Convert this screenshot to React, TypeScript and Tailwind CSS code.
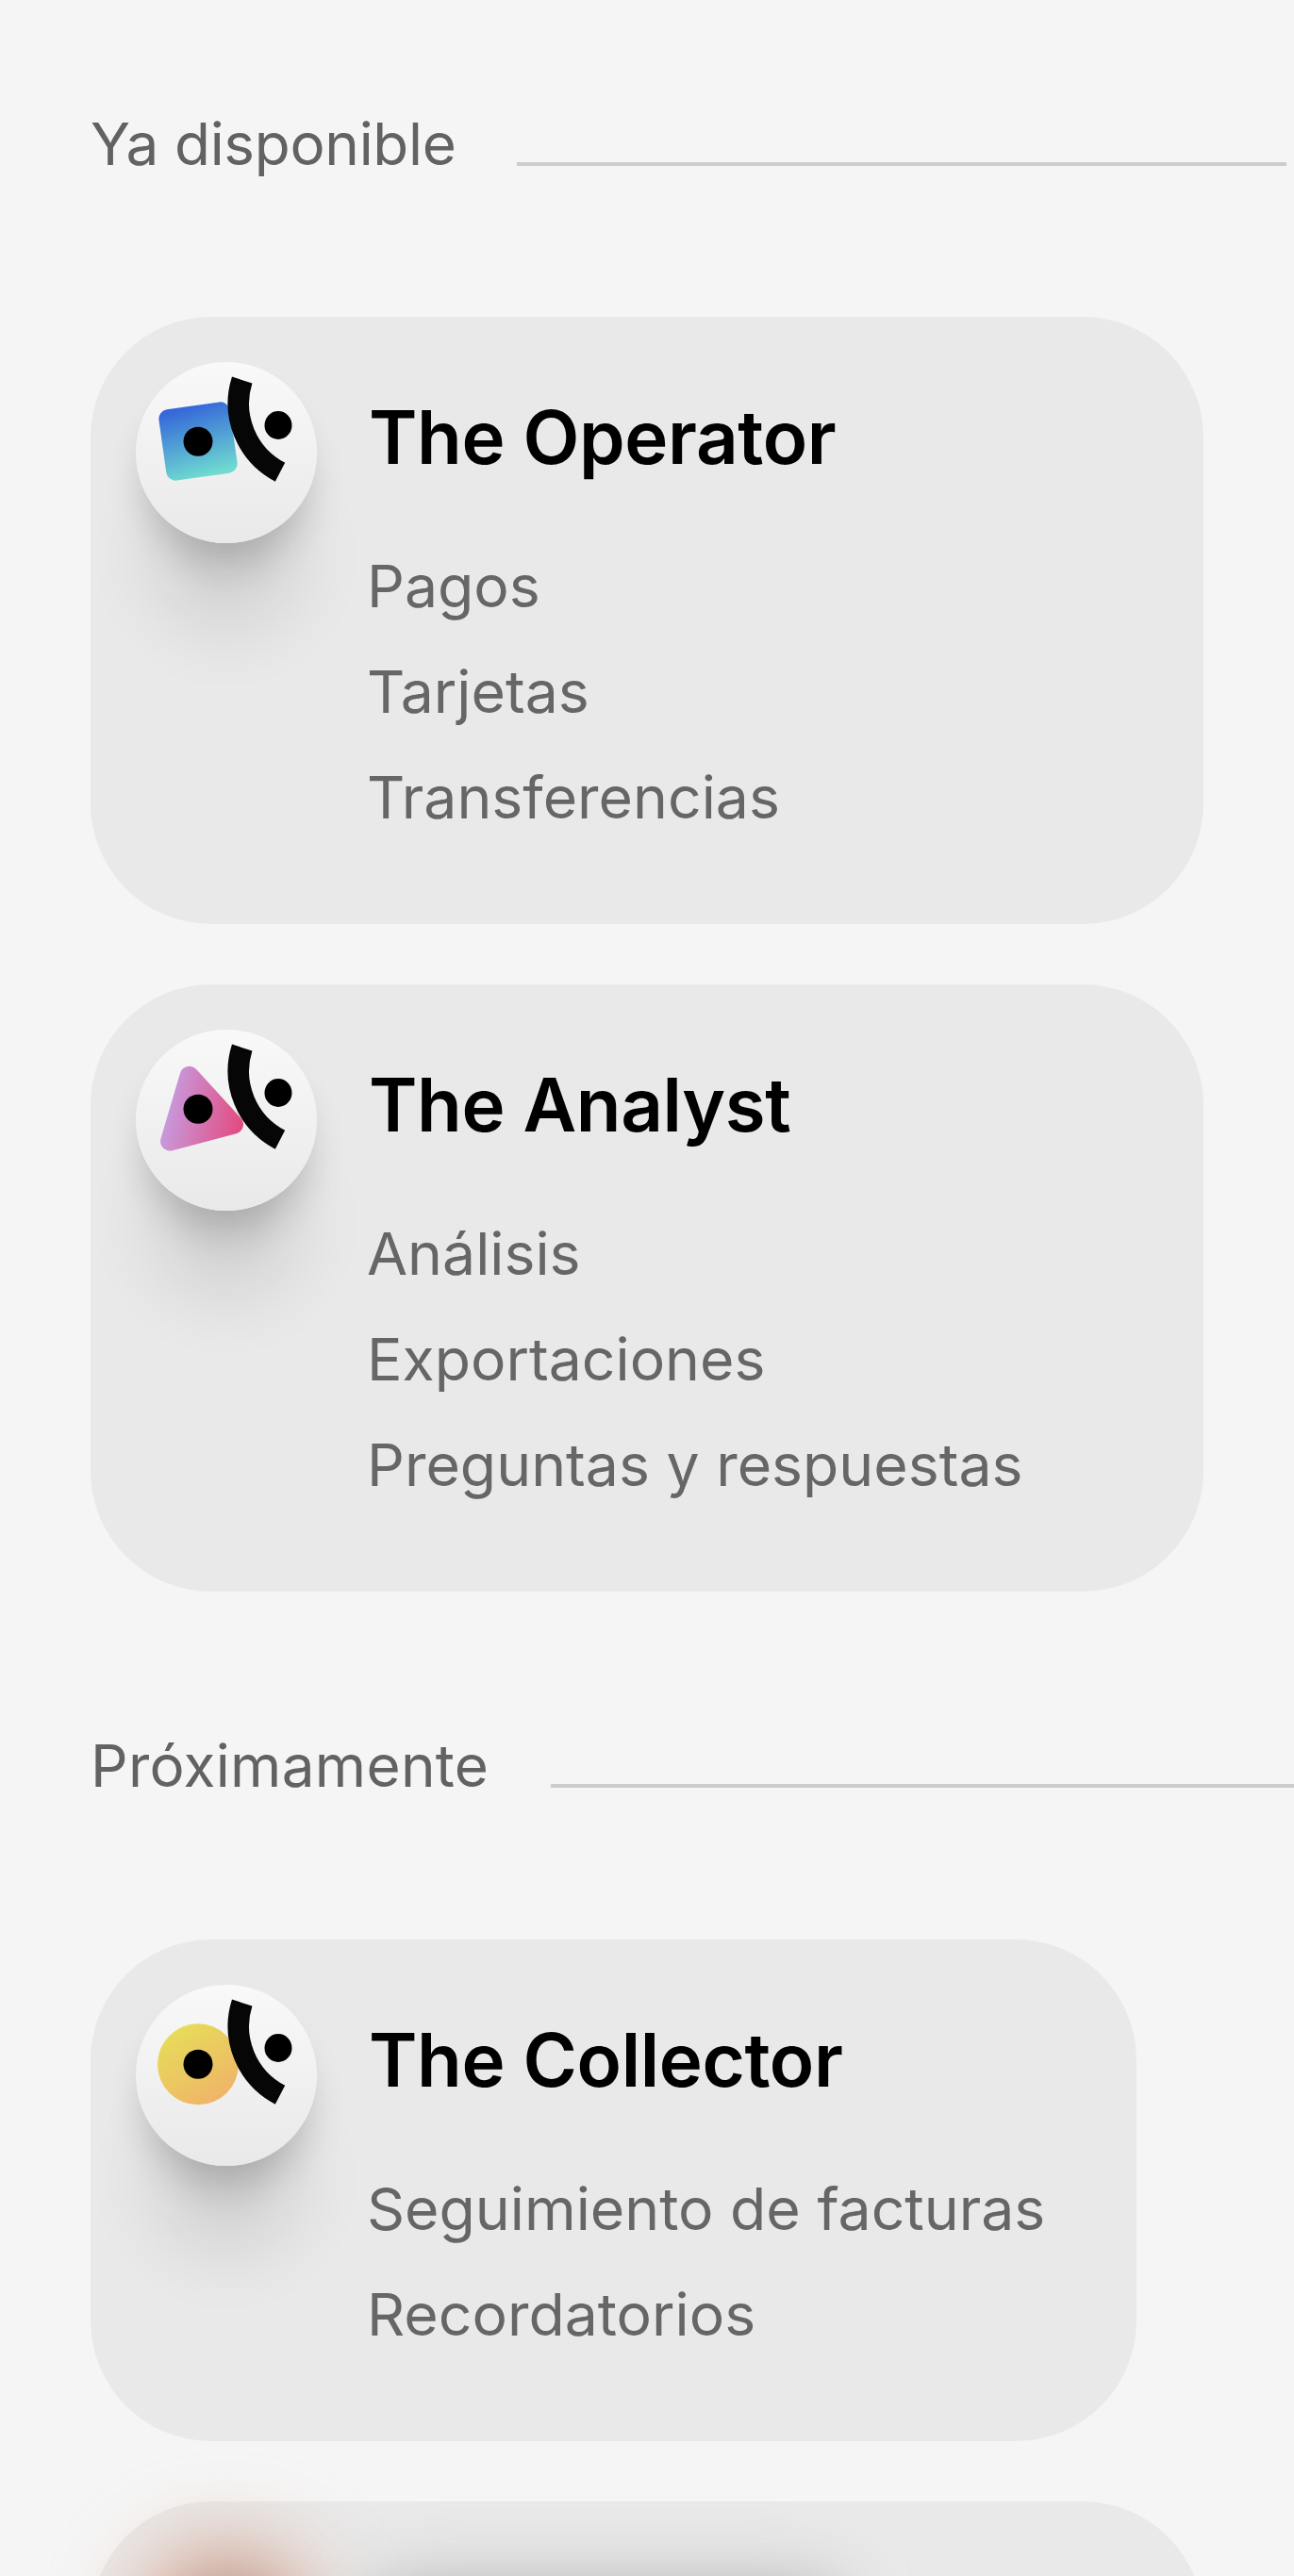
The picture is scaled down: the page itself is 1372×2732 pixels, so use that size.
const font = { fontFamily: "Inter, sans-serif" };

type Shape = "square" | "triangle" | "circle";

function Logo({ id, shape }: { id: string; shape: Shape }) {
  return (
    <svg viewBox="0 0 192 192" className="block h-[192px] w-[192px]">
      <defs>
        <linearGradient id={`${id}-square`} x1="61" y1="46" x2="72" y2="122" gradientUnits="userSpaceOnUse">
          <stop offset="0" stopColor="#3567d9" />
          <stop offset="1" stopColor="#6fdcd0" />
        </linearGradient>
        <linearGradient id={`${id}-triangle`} x1="28" y1="84" x2="118" y2="102" gradientUnits="userSpaceOnUse">
          <stop offset="0" stopColor="#c69ee2" />
          <stop offset="1" stopColor="#e5467a" />
        </linearGradient>
        <linearGradient id={`${id}-circle`} x1="40" y1="48" x2="90" y2="122" gradientUnits="userSpaceOnUse">
          <stop offset="0" stopColor="#e6dc5a" />
          <stop offset="1" stopColor="#f0b468" />
        </linearGradient>
      </defs>
      {shape === "square" && (
        <rect x="28" y="46" width="76" height="76" rx="10" fill={`url(#${id}-square)`} transform="rotate(-8 66 84)" />
      )}
      {shape === "triangle" && (
        <polygon
          points="56.7,48.7 36,118.5 104,100.5"
          fill={`url(#${id}-triangle)`}
          stroke={`url(#${id}-triangle)`}
          strokeWidth="20"
          strokeLinejoin="round"
        />
      )}
      {shape === "circle" && <circle cx="66" cy="84.3" r="43" fill={`url(#${id}-circle)`} />}
      <circle cx="66" cy="84.3" r="15.5" fill="#000" />
      <path d="M112.7 19 A82 82 0 0 0 153 116.7" fill="none" stroke="#060606" strokeWidth="22.5" />
      <ellipse cx="151" cy="67" rx="14.5" ry="15" fill="#000" />
    </svg>
  );
}

function Badge({ id, shape }: { id: string; shape: Shape }) {
  return (
    <div className="h-[192px] w-[192px] shrink-0 rounded-full bg-gradient-to-b from-[#f9f9f9] to-[#e9e9e9] shadow-[0_30px_40px_-10px_rgba(0,0,0,0.2),0_110px_80px_-20px_rgba(0,0,0,0.11)]">
      <Logo id={id} shape={shape} />
    </div>
  );
}

function Card({
  id,
  shape,
  title,
  items,
  width,
}: {
  id: string;
  shape: Shape;
  title: string;
  items: string[];
  width: string;
}) {
  return (
    <div className={`flex gap-[53px] rounded-[128px] bg-[#e9e9e9] pb-[79px] pl-[48px] pt-[48px] ${width}`}>
      <Badge id={id} shape={shape} />
      <div>
        <h2 className="ml-[2px] pt-[33px] text-[78px] font-semibold leading-[94px] tracking-[-0.005em] text-black">
          {title}
        </h2>
        <ul className="mt-[54px]">
          {items.map((item) => (
            <li key={item} className="whitespace-nowrap text-[62.5px] leading-[112px] text-[#666666]">
              {item}
            </li>
          ))}
        </ul>
      </div>
    </div>
  );
}

function SectionTitle({ children, labelClass }: { children: string; labelClass: string }) {
  return (
    <div className="flex items-end">
      <span className={`shrink-0 text-[62px] leading-[75px] text-[#626262] ${labelClass}`}>{children}</span>
      <div className="mb-[14px] h-[4px] w-[816px] shrink-0 bg-[#cccccc]" />
    </div>
  );
}

export default function App() {
  return (
    <div style={font} className="h-[2732px] w-[1372px] overflow-hidden bg-[#f5f5f5] pl-[96px] pt-[115px]">
      <SectionTitle labelClass="w-[452px] tracking-[-0.005em]">Ya disponible</SectionTitle>
      <div className="mt-[146px] flex flex-col gap-[64px]">
        <Card
          id="operator"
          shape="square"
          title="The Operator"
          items={["Pagos", "Tarjetas", "Transferencias"]}
          width="w-[1180px]"
        />
        <Card
          id="analyst"
          shape="triangle"
          title="The Analyst"
          items={["Análisis", "Exportaciones", "Preguntas y respuestas"]}
          width="w-[1180px]"
        />
      </div>
      <div className="mt-[147px]">
        <SectionTitle labelClass="w-[488px] tracking-[0.005em]">Próximamente</SectionTitle>
      </div>
      <div className="mt-[147px] flex flex-col gap-[64px]">
        <Card
          id="collector"
          shape="circle"
          title="The Collector"
          items={["Seguimiento de facturas", "Recordatorios"]}
          width="w-[1109px]"
        />
        {/* locked card: content is blurred out */}
        <div className="flex h-[600px] w-[1180px] gap-[56px] rounded-[128px] bg-[#e9e9e9] pl-[48px] pt-[48px]">
          <div className="relative h-[192px] w-[192px] shrink-0 blur-[44px]">
            <div className="h-full w-full rounded-full bg-[#e2a890]" />
            <div className="absolute left-[70px] top-[40px] h-[120px] w-[60px] rounded-full bg-[#777777]" />
          </div>
          <div className="mt-[40px] h-[70px] w-[500px] rounded-full bg-[#b0b0b0] blur-[36px]" />
        </div>
      </div>
    </div>
  );
}
